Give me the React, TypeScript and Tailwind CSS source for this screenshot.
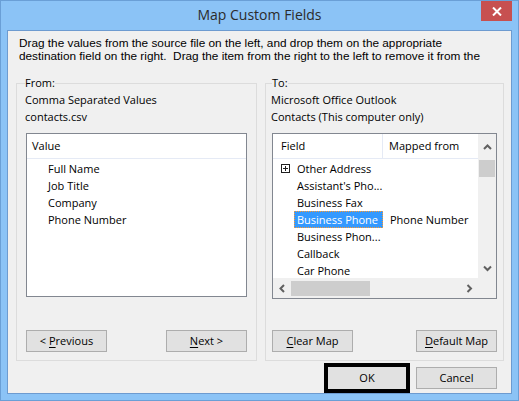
const leftItems = ['Full Name', 'Job Title', 'Company', 'Phone Number']

const rightRows = [
  { field: 'Other Address', mapped: '', expand: true },
  { field: "Assistant's Pho...", mapped: '' },
  { field: 'Business Fax', mapped: '' },
  { field: 'Business Phone', mapped: 'Phone Number', selected: true },
  { field: 'Business Phon...', mapped: '' },
  { field: 'Callback', mapped: '' },
  { field: 'Car Phone', mapped: '' },
]

const ui = { fontFamily: "'Open Sans', 'Noto Sans', sans-serif" }

function Chevron({ dir }: { dir: 'up' | 'down' | 'left' | 'right' }) {
  const pts = {
    up: '1,6 4.5,2.5 8,6',
    down: '1,2.5 4.5,6 8,2.5',
    left: '6,1 2.5,4.5 6,8',
    right: '2.5,1 6,4.5 2.5,8',
  }[dir]
  return (
    <svg width="9" height="9" viewBox="0 0 9 9">
      <polyline points={pts} fill="none" stroke="#606060" strokeWidth="2" />
    </svg>
  )
}

function Btn({ children, className = '' }: { children: React.ReactNode; className?: string }) {
  return (
    <div
      className={`h-[22px] w-[81px] bg-[#e1e1e1] border border-[#adadad] flex items-center justify-center text-[11px] text-black ${className}`}
      style={ui}
    >
      {children}
    </div>
  )
}

export default function App() {
  return (
    <div className="w-[519px] h-[401px] bg-[#8bc3f6] border border-[#6a9fd6] flex flex-col overflow-hidden">
      {/* Title bar */}
      <div className="h-[29px] relative flex items-center justify-center shrink-0">
        <span className="text-[14px] text-[#2b2b2b] -mt-[2px]" style={ui}>
          Map Custom Fields
        </span>
        <div className="absolute top-0 right-[6px] w-[31px] h-[20px] bg-[#c75050] flex items-center justify-center">
          <svg width="10" height="9" viewBox="0 0 10 9">
            <path d="M1 0.5 L9 8.5 M9 0.5 L1 8.5" stroke="white" strokeWidth="2" />
          </svg>
        </div>
      </div>

      {/* Client area */}
      <div className="mx-[6px] mb-[6px] flex-1 bg-[#f0f0f0] border border-[#6d9bd0] flex flex-col">
        <p
          className="pl-[11px] pt-[6px] text-[11.8px] leading-[13px] text-black whitespace-nowrap overflow-hidden"
          style={{ fontFamily: "'Liberation Sans', Arial, sans-serif" }}
        >
          Drag the values from the source file on the left, and drop them on the appropriate
          <br />
          destination field on the right.&nbsp; Drag the item from the right to the left to remove it from the
        </p>

        <div className="flex mt-[13px] pl-[8px] gap-[8px]">
          {/* From group */}
          <fieldset className="w-[241px] h-[285px] border border-[#dcdcdc] px-[9px] pb-[8px] flex flex-col" style={ui}>
            <legend className="-ml-[1px] px-0 text-[11px] leading-[14px] text-black">From:</legend>
            <div className="text-[11px] leading-[17px] text-black mt-[1px] -ml-[1px]">
              <div>Comma Separated Values</div>
              <div>contacts.csv</div>
            </div>
            <div className="mt-[8px] h-[164px] border border-[#828790] bg-white flex flex-col">
              <div className="h-[25px] border-b border-[#e5eaf5] flex items-center pl-[5px] text-[11px] text-black">
                Value
              </div>
              <div className="pt-[1px] pl-[21px] text-[11px] leading-[17px] text-black">
                {leftItems.map((it) => (
                  <div key={it}>{it}</div>
                ))}
              </div>
            </div>
            <div className="mt-auto flex justify-between">
              <Btn>
                &lt;&nbsp;<span className="underline underline-offset-2">P</span>revious
              </Btn>
              <Btn>
                <span className="underline underline-offset-2">N</span>ext &gt;
              </Btn>
            </div>
          </fieldset>

          {/* To group */}
          <fieldset className="w-[239px] h-[285px] border border-[#dcdcdc] pl-[6px] pr-[6px] pb-[8px] flex flex-col" style={ui}>
            <legend className="ml-0 px-0 text-[11px] leading-[14px] text-black">To:</legend>
            <div className="text-[11px] leading-[17px] text-black mt-[1px] -ml-[1px]">
              <div>Microsoft Office Outlook</div>
              <div>Contacts (This computer only)</div>
            </div>
            <div className="mt-[8px] h-[166px] border border-[#828790] bg-white flex flex-col">
              <div className="flex flex-1 min-h-0">
                <div className="flex-1 flex flex-col overflow-hidden">
                  <div className="h-[25px] shrink-0 border-b border-[#e5eaf5] flex text-[11px] text-black">
                    <div className="w-[110px] border-r border-[#e5eaf5] flex items-center pl-[8px]">Field</div>
                    <div className="flex items-center pl-[6px]">Mapped from</div>
                  </div>
                  <div className="pt-[1px] text-[11px] leading-[17px] text-black">
                    {rightRows.map((r) => (
                      <div key={r.field} className="flex h-[17px] items-center">
                        <div className="w-[21px] flex justify-center pl-[3px]">
                          {r.expand && (
                            <svg width="9" height="9" viewBox="0 0 9 9">
                              <rect x="0.5" y="0.5" width="8" height="8" fill="white" stroke="#1e1e1e" />
                              <path d="M2 4.5 H7 M4.5 2 V7" stroke="#1e1e1e" />
                            </svg>
                          )}
                        </div>
                        <div className="w-[96px] flex">
                          <span
                            className={
                              r.selected
                                ? 'bg-[#3399ff] text-white outline outline-1 outline-dotted outline-[#ff9a2e] -outline-offset-1 px-[3px] w-[89px] h-[17px] flex items-center'
                                : 'px-[3px]'
                            }
                          >
                            {r.field}
                          </span>
                        </div>
                        <div>{r.mapped}</div>
                      </div>
                    ))}
                  </div>
                </div>
                {/* vertical scrollbar */}
                <div className="w-[18px] bg-[#f0f0f0] flex flex-col items-center">
                  <div className="h-[26px] flex items-center justify-center">
                    <Chevron dir="up" />
                  </div>
                  <div className="w-[16px] h-[17px] bg-[#cdcdcd]" />
                  <div className="mt-auto h-[20px] flex items-center justify-center">
                    <Chevron dir="down" />
                  </div>
                </div>
              </div>
              {/* horizontal scrollbar */}
              <div className="h-[20px] shrink-0 bg-[#f0f0f0] flex items-center">
                <div className="w-[18px] flex justify-center">
                  <Chevron dir="left" />
                </div>
                <div className="w-[79px] h-[15px] bg-[#cdcdcd]" />
                <div className="flex-1" />
                <div className="w-[18px] flex justify-center">
                  <Chevron dir="right" />
                </div>
                <div className="w-[18px]" />
              </div>
            </div>
            <div className="mt-auto flex justify-between">
              <Btn>
                <span className="underline underline-offset-2">C</span>lear Map
              </Btn>
              <Btn>
                <span className="underline underline-offset-2">D</span>efault Map
              </Btn>
            </div>
          </fieldset>
        </div>

        {/* Bottom buttons */}
        <div className="flex justify-end items-center mt-[2px] pr-[14px] gap-[6px]">
          <div className="w-[86px] h-[30px] border-[4px] border-black bg-[#e1e1e1] flex items-center justify-center text-[11px] text-black" style={ui}>
            OK
          </div>
          <Btn className="w-[80px]">Cancel</Btn>
        </div>
      </div>
    </div>
  )
}
